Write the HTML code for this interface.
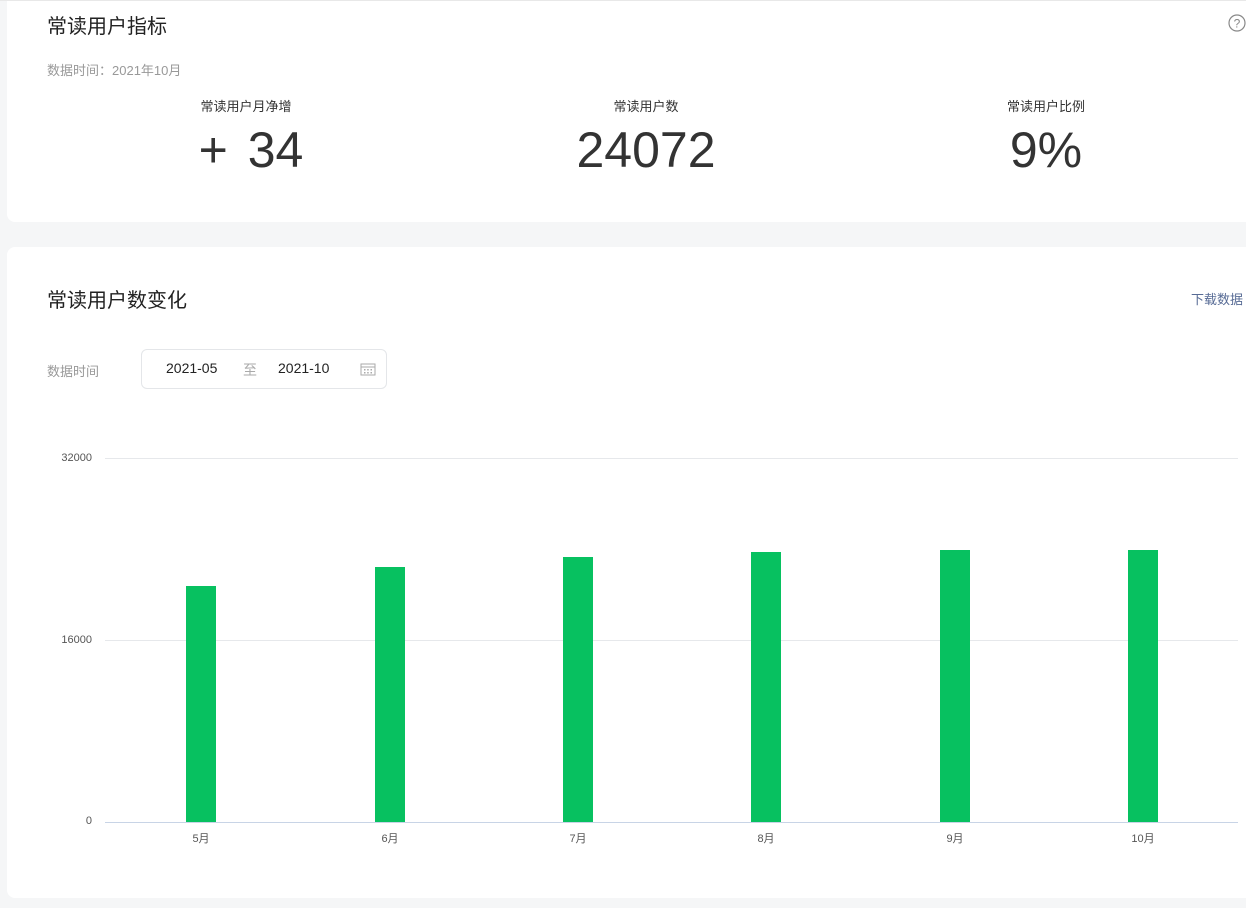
<!DOCTYPE html>
<html><head><meta charset="utf-8"><style>
*{margin:0;padding:0;box-sizing:border-box}
body{width:1246px;height:908px;background:#f5f6f7;font-family:"Liberation Sans","Noto Sans CJK SC",sans-serif;position:relative;overflow:hidden;color:#353535}
.card{position:absolute;background:#fff;border-radius:8px;left:7px;width:1260px}
.abs{position:absolute;white-space:nowrap}
.grid{position:absolute;left:105px;width:1133px;height:1px;background:#e6e8eb}
.bar{position:absolute;width:30px;background:#07c160}
.yl{position:absolute;right:1154px;font-size:11px;color:#555}
.xl{position:absolute;top:830px;width:60px;text-align:center;font-size:11px;color:#555}
</style></head><body>
<div class="card" style="top:-10px;height:232px"></div>
<div class="card" style="top:247px;height:651px"></div>
<div class="abs" style="left:0;top:0;width:1246px;height:1px;background:#e8e8e8"></div>
<div class="abs" style="left:47px;top:10px;font-size:20px;color:#222">常读用户指标</div>
<svg class="abs" style="left:1228px;top:14px" width="18" height="18" viewBox="0 0 18 18"><circle cx="9" cy="9" r="8" fill="none" stroke="#888" stroke-width="1.2"/><text x="9" y="13.5" font-size="12" text-anchor="middle" fill="#888" font-family="Liberation Sans">?</text></svg>
<div class="abs" style="left:47px;top:60px;font-size:13px;color:#999">数据时间：2021年10月</div>
<div class="abs" style="left:146px;width:200px;text-align:center;top:96px;font-size:13px;color:#333">常读用户月净增</div>
<div class="abs" style="left:151px;width:200px;text-align:center;top:121px;font-size:50px;color:#333;word-spacing:6px">+ 34</div>
<div class="abs" style="left:546px;width:200px;text-align:center;top:96px;font-size:13px;color:#333">常读用户数</div>
<div class="abs" style="left:546px;width:200px;text-align:center;top:121px;font-size:50px;color:#333">24072</div>
<div class="abs" style="left:946px;width:200px;text-align:center;top:96px;font-size:13px;color:#333">常读用户比例</div>
<div class="abs" style="left:946px;width:200px;text-align:center;top:121px;font-size:50px;color:#333">9%</div>

<div class="abs" style="left:47px;top:284px;font-size:20px;color:#222">常读用户数变化</div>
<div class="abs" style="left:1191px;top:289px;font-size:13px;color:#576b95">下载数据</div>
<div class="abs" style="left:47px;top:361px;font-size:13px;color:#999">数据时间</div>
<div class="abs" style="left:141px;top:349px;width:246px;height:40px;border:1px solid #e4e6e9;border-radius:6px"></div>
<div class="abs" style="left:166px;top:360px;font-size:14px;color:#222">2021-05</div>
<div class="abs" style="left:243px;top:360px;font-size:14px;color:#aaa">至</div>
<div class="abs" style="left:278px;top:360px;font-size:14px;color:#222">2021-10</div>
<svg class="abs" style="left:360px;top:362px" width="16" height="14" viewBox="0 0 16 14"><rect x="1" y="2" width="14" height="11" fill="none" stroke="#aaa"/><line x1="1" y1="5" x2="15" y2="5" stroke="#aaa"/><g fill="#aaa"><rect x="4" y="7" width="1.5" height="1.5"/><rect x="7.2" y="7" width="1.5" height="1.5"/><rect x="10.5" y="7" width="1.5" height="1.5"/><rect x="4" y="10" width="1.5" height="1.5"/><rect x="7.2" y="10" width="1.5" height="1.5"/><rect x="10.5" y="10" width="1.5" height="1.5"/></g></svg>

<div class="grid" style="top:458px"></div>
<div class="grid" style="top:640px"></div>
<div class="grid" style="top:822px;background:#c8d4e6"></div>
<div class="yl" style="top:452px">32000</div>
<div class="yl" style="top:634px">16000</div>
<div class="yl" style="top:815px">0</div>
<div class="bar" style="left:186px;top:586px;height:236px"></div>
<div class="bar" style="left:375px;top:567px;height:255px"></div>
<div class="bar" style="left:563px;top:557px;height:265px"></div>
<div class="bar" style="left:751px;top:552px;height:270px"></div>
<div class="bar" style="left:940px;top:550px;height:272px"></div>
<div class="bar" style="left:1128px;top:550px;height:272px"></div>
<div class="xl" style="left:171px">5月</div>
<div class="xl" style="left:360px">6月</div>
<div class="xl" style="left:548px">7月</div>
<div class="xl" style="left:736px">8月</div>
<div class="xl" style="left:925px">9月</div>
<div class="xl" style="left:1113px">10月</div>
</body></html>
